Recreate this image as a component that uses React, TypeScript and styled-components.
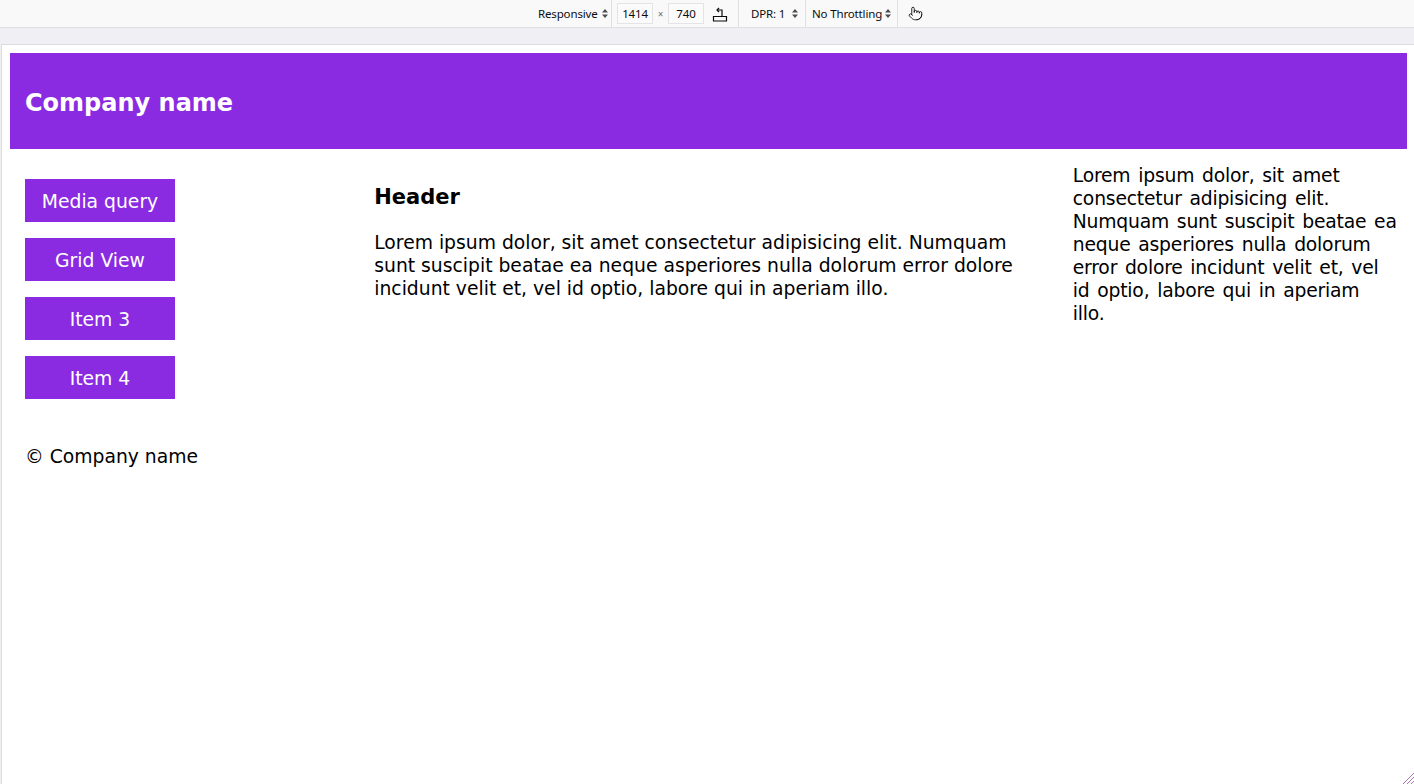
import React from "react";
import styled, { createGlobalStyle } from "styled-components";
import { Pointer } from "lucide-react";

const GlobalStyle = createGlobalStyle`
  html, body {
    margin: 0;
    padding: 0;
    width: 1414px;
    height: 784px;
    overflow: hidden;
    background: #f0f0f4;
  }
  * { box-sizing: border-box; }
`;

const Shell = styled.div`
  display: flex;
  flex-direction: column;
  width: 1414px;
  height: 784px;
`;

const Toolbar = styled.div`
  height: 28px;
  flex: none;
  background: #f9f9fa;
  border-bottom: 1px solid #e0e0e2;
  display: flex;
  align-items: stretch;
  padding-left: 538px;
  font-family: "Noto Sans", "Open Sans", sans-serif;
  font-size: 11.5px;
  letter-spacing: -0.15px;
  color: #0c0c0d;
`;

const ToolItem = styled.div<{ $w: number; $pl?: number; $gap?: number }>`
  width: ${(p) => p.$w}px;
  flex: none;
  display: flex;
  align-items: center;
  gap: ${(p) => p.$gap ?? 4}px;
  padding-left: ${(p) => p.$pl ?? 0}px;
  white-space: nowrap;
`;

const Sep = styled.div`
  width: 1px;
  flex: none;
  background: #e0e0e2;
`;

const SizeInput = styled.div`
  width: 36px;
  height: 21px;
  border: 1px solid #e4e4e6;
  background: #fbfbfc;
  display: flex;
  align-items: center;
  justify-content: center;
`;

const Times = styled.span`
  width: 15px;
  text-align: center;
  color: #737373;
  font-size: 10px;
`;

const IconSlot = styled.span`
  display: flex;
  margin-left: 8px;
`;

const Strip = styled.div`
  height: 16px;
  flex: none;
`;

const Viewport = styled.div`
  position: relative;
  flex: 1;
  margin-left: 1px;
  width: 1414px;
  background: #ffffff;
  border-top: 1px solid #dcdcde;
  border-left: 1px solid #dcdcde;
  padding: 8px;
  font-family: "DejaVu Sans", "Verdana", sans-serif;
  font-size: 18.75px;
  line-height: 23px;
  color: #000;
`;

const Header = styled.header`
  background: #8a2be2;
  color: #fff;
  height: 96px;
  display: flex;
  align-items: center;
  padding: 4px 15px 0;
`;

const Title = styled.h1`
  margin: 0;
  font-size: 24px;
  font-weight: bold;
  line-height: 28px;
`;

const Grid = styled.div`
  display: grid;
  grid-template-columns: 25% 50% 25%;
  align-items: start;
`;

const Col = styled.div<{ $pr?: number; $ws?: number; $ls?: number }>`
  padding: 15px ${(p) => p.$pr ?? 15}px 15px 15px;
  word-spacing: ${(p) => p.$ws ?? 0}px;
  letter-spacing: ${(p) => p.$ls ?? 0}px;
`;

const Menu = styled.ul`
  list-style: none;
  margin: 15px 0 0;
  padding: 0;
  display: flex;
  flex-direction: column;
  gap: 16px;
`;

const MenuItem = styled.li`
  width: 150px;
  height: 43px;
  padding-top: 1px;
  background: #8a2be2;
  color: #fff;
  display: flex;
  align-items: center;
  justify-content: center;
`;

const SubTitle = styled.h2`
  margin: 19px 0 19.5px;
  font-size: 21px;
  line-height: 28px;
  font-weight: bold;
`;

const Para = styled.p`
  margin: 0;
`;

const Footer = styled.footer`
  padding: 30.5px 15px 15px;
`;

const Resize = styled.svg`
  position: absolute;
  right: 0;
  bottom: 0;
`;

const Arrows = () => (
  <svg width="6" height="9" viewBox="0 0 6 9">
    <path d="M3 0 L6 3.5 H0 Z M3 9 L6 5.5 H0 Z" fill="#4a4a4f" />
  </svg>
);

const RotateIcon = () => (
  <svg width="16" height="16" viewBox="0 0 16 16" fill="none" stroke="#0c0c0d" strokeWidth="1.2">
    <path d="M1.5 10.5 V15 H14.5 V10.5 Z" />
    <path d="M10 10 V4 H5" />
    <path d="M7 2 L5 4 L7 6" />
  </svg>
);

const lorem =
  "Lorem ipsum dolor, sit amet consectetur adipisicing elit. Numquam sunt suscipit beatae ea neque asperiores nulla dolorum error dolore incidunt velit et, vel id optio, labore qui in aperiam illo.";

export default function App() {
  const items = ["Media query", "Grid View", "Item 3", "Item 4"];
  return (
    <Shell>
      <GlobalStyle />
      <Toolbar>
        <ToolItem $w={73}>
          Responsive <Arrows />
        </ToolItem>
        <Sep />
        <ToolItem $w={126} $pl={5} $gap={0}>
          <SizeInput>1414</SizeInput>
          <Times>×</Times>
          <SizeInput>740</SizeInput>
          <IconSlot>
            <RotateIcon />
          </IconSlot>
        </ToolItem>
        <Sep />
        <ToolItem $w={66} $pl={12} $gap={7}>
          DPR: 1 <Arrows />
        </ToolItem>
        <Sep />
        <ToolItem $w={91} $pl={6} $gap={3}>
          No Throttling <Arrows />
        </ToolItem>
        <Sep />
        <ToolItem $w={40} $pl={10}>
          <Pointer size={15} strokeWidth={1.4} color="#0c0c0d" />
        </ToolItem>
      </Toolbar>
      <Strip />
      <Viewport>
        <Header>
          <Title>Company name</Title>
        </Header>
        <Grid>
          <Col>
            <Menu>
              {items.map((t) => (
                <MenuItem key={t}>{t}</MenuItem>
              ))}
            </Menu>
          </Col>
          <Col>
            <SubTitle>Header</SubTitle>
            <Para>{lorem}</Para>
          </Col>
          <Col $pr={9} $ws={2} $ls={-0.2}>
            <Para>{lorem}</Para>
          </Col>
        </Grid>
        <Footer>© Company name</Footer>
        <Resize width="14" height="14" viewBox="0 0 14 14">
          <path d="M14 2 L2 14 M14 6 L6 14 M14 10 L10 14" stroke="#b07ab8" strokeWidth="1" />
        </Resize>
      </Viewport>
    </Shell>
  );
}
